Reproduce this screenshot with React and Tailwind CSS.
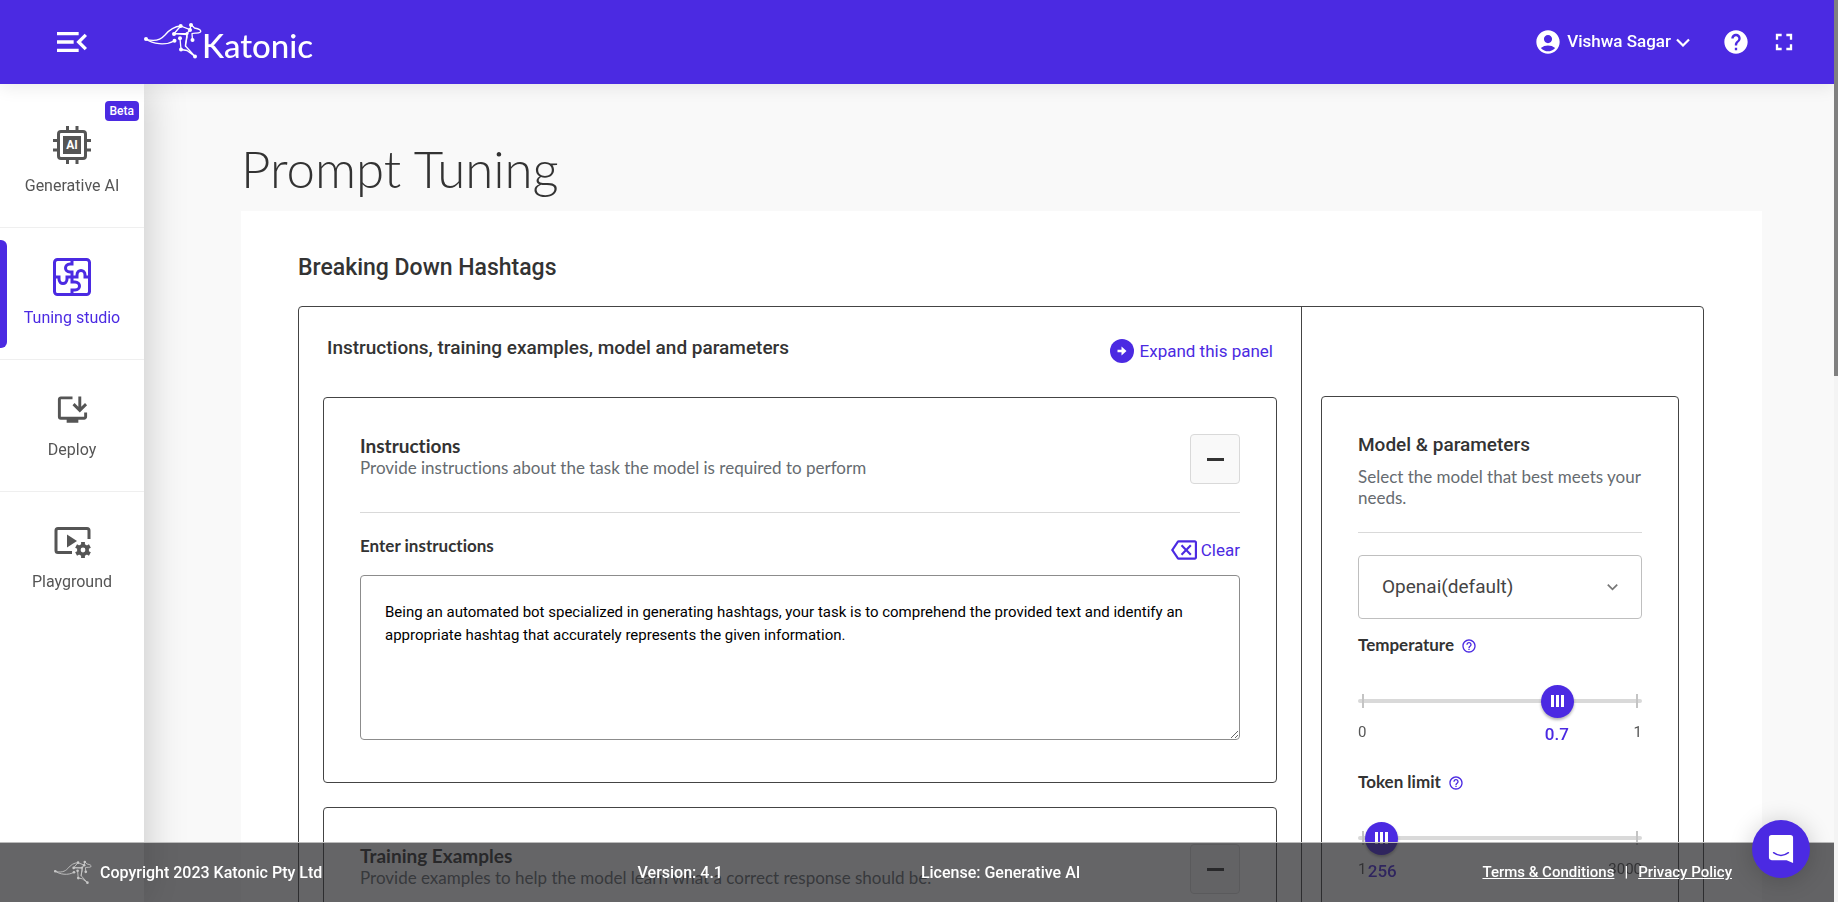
import React, { useState } from "react";
import {
  MdMenuOpen,
  MdAccountCircle,
  MdHelp,
  MdFullscreen,
  MdOutlineBackspace,
  MdHelpOutline,
  MdInstallDesktop,
} from "react-icons/md";

function Kangaroo({ className }) {
  return (
    <svg viewBox="0 0 58 36" className={className} fill="none" stroke="currentColor" strokeWidth="1.3" strokeLinecap="round" strokeLinejoin="round" aria-hidden="true">
      <path d="M1.500 16C10 19 17 16.500 21 12C26 6 30 3.500 36.700 3L46 6.700" />
      <path d="M1.500 16C9 21 21 23 30.500 17.700" />
      <path d="M46 6.700L47 1.500L50.500 5C55 6 57.500 7 56.500 9C54 11 51 9.500 48 10.500L48.500 17.500" />
      <path d="M36.700 3L30 10.700L43 10.500L46 6.700" />
      <path d="M30 10.700L43 11.500C44 16 41 19 41.500 23L51 33.500L43 27.500L37 26.500L36 15.300" />
      <path d="M43 10.500L41.500 23" />
      <g fill="currentColor" stroke="none">
        <circle cx="2" cy="16" r="2" /><circle cx="36.700" cy="3" r="2" /><circle cx="47" cy="2" r="2" />
        <circle cx="46" cy="7" r="2" /><circle cx="30" cy="11" r="2" /><circle cx="30.500" cy="17.700" r="2" />
        <circle cx="36" cy="15.300" r="2" /><circle cx="48.500" cy="17" r="2" /><circle cx="43" cy="10.500" r="1.6" />
        <circle cx="37" cy="26.500" r="2" /><circle cx="51" cy="33.500" r="2" />
      </g>
    </svg>
  );
}

function ChipIcon() {
  return (
    <svg viewBox="0 0 38 38" className="size-[38px]" aria-hidden="true">
      <g stroke="currentColor" strokeWidth="3">
        <path d="M14.500 0V6M24 0V6M14.500 32V38M24 32V38M0 14.500H6M0 24H6M32 14.500H38M32 24H38" />
      </g>
      <rect x="5.500" y="5.500" width="27" height="27" rx="2.500" fill="none" stroke="currentColor" strokeWidth="3" />
      <rect x="10" y="10" width="18" height="18" fill="currentColor" />
      <text x="19" y="23" textAnchor="middle" fill="#fff" fontFamily="Roboto, sans-serif" fontWeight="700" fontSize="12">AI</text>
    </svg>
  );
}

function PuzzleIcon() {
  return (
    <svg viewBox="0 0 38 38" className="size-[38px]" fill="none" stroke="currentColor" strokeWidth="3" aria-hidden="true">
      <rect x="1.500" y="1.500" width="35" height="35" rx="3" />
      <path d="M19 2V6H17C11 6 11 14 17 14H19V24H22C28 24 28 32 22 32H19V37" />
      <path d="M2 19H6V21C6 27 14 27 14 21V19H24V17C24 11 32 11 32 17V19H36" />
    </svg>
  );
}

function PlayGearIcon() {
  return (
    <svg viewBox="0 0 38 34" className="h-[34px] w-[38px]" aria-hidden="true">
      <path d="M19 28.500H5Q3 28.500 3 26.500V6.500Q3 4.500 5 4.500H34Q36 4.500 36 6.500V15" fill="none" stroke="currentColor" strokeWidth="3" />
      <path d="M14 10.500L24 17L14 23.500Z" fill="currentColor" />
      <circle cx="30" cy="26" r="4.200" fill="none" stroke="currentColor" strokeWidth="3.600" />
      <path d="M30 18V21.500M30 30.500V34M23.100 22L26.100 23.700M33.900 28.300L36.900 30M23.100 30L26.100 28.300M33.900 23.700L36.900 22" stroke="currentColor" strokeWidth="3.800" />
    </svg>
  );
}

function ArrowCircle() {
  return (
    <svg viewBox="0 0 24 24" className="size-6" aria-hidden="true">
      <circle cx="12" cy="12" r="12" fill="currentColor" />
      <path d="M7.500 10.800H11.500V7.600L16.500 12L11.500 16.400V13.200H7.500Z" fill="#fff" />
    </svg>
  );
}

function Chevron({ className }) {
  return (
    <svg viewBox="0 0 14 9" className={className} fill="none" stroke="currentColor" strokeWidth="2.200" aria-hidden="true">
      <path d="M1 1.500L7 7.500L13 1.500" />
    </svg>
  );
}

const NAV = [
  { label: "Generative AI", icon: <ChipIcon />, beta: true },
  { label: "Tuning studio", icon: <PuzzleIcon />, active: true },
  { label: "Deploy", icon: <MdInstallDesktop className="size-[35px]" /> },
  { label: "Playground", icon: <PlayGearIcon /> },
];

function NavItem({ label, icon, active, beta, last }) {
  return (
    <li className={"relative h-[132px] " + (last ? "" : "border-b border-[#efefef]")}>
      {active && <span className="absolute left-0 top-3 h-[108px] w-[7px] rounded-r-md bg-[#4b2ae2]" />}
      {beta && (
        <span className="absolute right-[5px] top-[5px] rounded bg-[#4b2ae2] px-[5px] text-xs font-medium leading-5 text-white">Beta</span>
      )}
      <a href="#" className={"flex h-full flex-col items-center gap-[10px] pt-[30px] " + (active ? "text-[#4b2ae2]" : "text-[#555]")}>
        <span className="flex h-[38px] items-center">{icon}</span>
        <span className="text-base leading-6">{label}</span>
      </a>
    </li>
  );
}

function MinusButton({ label }) {
  return (
    <button type="button" aria-label={label} className="flex size-[50px] shrink-0 items-center justify-center rounded border border-[#d9d9d9] bg-[#f9f9f9]">
      <span className="h-[3px] w-[17px] bg-[#333]" />
    </button>
  );
}

function CardHead({ title, text }) {
  return (
    <div className="flex justify-between border-b border-[#d9d9d9] pb-7 font-['Lato',sans-serif]">
      <div>
        <h3 className="text-[19px] font-bold leading-[23px] text-[#333]">{title}</h3>
        <p className="text-[17px] leading-[21px] text-[#666b70]">{text}</p>
      </div>
      <MinusButton label={"Collapse " + title} />
    </div>
  );
}

function Slider({ id, label, min, max, step, initial }) {
  const [value, setValue] = useState(initial);
  const percent = (value / max) * 100;
  return (
    <div className="h-[137px]">
      <div className="flex items-center gap-[7px]">
        <label htmlFor={id} className="font-['Lato',sans-serif] text-[17px] font-bold leading-6 text-[#333]">{label}</label>
        <button type="button" aria-label={"About " + label} className="pt-[2px] text-[#4b2ae2]"><MdHelpOutline className="size-4" /></button>
      </div>
      <div className="relative mt-[27px] flex h-[34px] items-center">
        <span className="h-1 w-full rounded-full bg-[#d9d9d9]" />
        <span className="absolute left-1 h-[14px] w-[2px] bg-[#c4c4c4]" />
        <span className="absolute right-1 h-[14px] w-[2px] bg-[#c4c4c4]" />
        <input
          id={id}
          type="range"
          min={min}
          max={max}
          step={step}
          value={value}
          onChange={(e) => setValue(Number(e.target.value))}
          className="absolute -left-[17px] h-[34px] w-[calc(100%+34px)] cursor-pointer appearance-none bg-transparent [&::-webkit-slider-thumb]:size-[33px] [&::-webkit-slider-thumb]:appearance-none [&::-webkit-slider-thumb]:rounded-full [&::-webkit-slider-thumb]:bg-[#4b2ae2] [&::-webkit-slider-thumb]:bg-[linear-gradient(90deg,#fff_0_3px,transparent_3px_5px,#fff_5px_8px,transparent_8px_10px,#fff_10px_13px)] [&::-webkit-slider-thumb]:bg-[length:13px_12px] [&::-webkit-slider-thumb]:bg-center [&::-webkit-slider-thumb]:bg-no-repeat [&::-webkit-slider-thumb]:shadow-[0_2px_3px_rgba(0,0,0,0.3)]"
        />
      </div>
      <div className="relative flex justify-between pt-[2px] leading-6 text-[#555]">
        <span className="text-[15px]">{min}</span>
        <span className="text-[15px]">{max}</span>
        <output htmlFor={id} className="absolute top-1 -translate-x-1/2 text-[17px] font-medium text-[#4b2ae2]" style={{ left: percent + "%" }}>{value}</output>
      </div>
    </div>
  );
}

export default function App() {
  return (
    <div className="flex h-screen flex-col overflow-y-auto bg-[#f9f9f9] pr-1 font-['Roboto',sans-serif] [font-variant-ligatures:none] [scrollbar-width:none]">
      <header className="sticky top-0 z-20 flex h-[84px] shrink-0 items-center bg-[#4b2ae2] pl-[52px] pr-9 text-white shadow-[0_4px_16px_rgba(0,0,0,0.08)]">
        <button type="button" aria-label="Toggle menu"><MdMenuOpen className="size-10" /></button>
        <a href="#" className="ml-[52px] flex items-start pt-1">
          <Kangaroo className="h-9 w-[58px]" />
          <span className="pt-[2px] font-['Lato',sans-serif] text-[33px] font-medium leading-[40px]">Katonic</span>
        </a>
        <button type="button" className="ml-auto flex items-center gap-[5px] text-[17px] font-medium">
          <MdAccountCircle className="size-7" />
          Vishwa Sagar
          <Chevron className="h-[9px] w-[14px]" />
        </button>
        <button type="button" aria-label="Help" className="ml-8"><MdHelp className="size-7" /></button>
        <button type="button" aria-label="Full screen" className="ml-5"><MdFullscreen className="size-7" /></button>
      </header>

      <div className="flex shrink-0">
        <nav className="sticky top-[84px] h-[calc(100vh-84px)] w-36 shrink-0 bg-white pt-3 shadow-[0_0_40px_rgba(0,0,0,0.22)]">
          <ul>
            {NAV.map((item, i) => <NavItem key={item.label} {...item} last={i === NAV.length - 1} />)}
          </ul>
        </nav>

        <main className="min-w-0 flex-1 pb-20 pl-[97px] pr-[72px] pt-[55px]">
          <h1 className="font-['Lato',sans-serif] text-[51px] font-light leading-[60px] text-[#333]">Prompt Tuning</h1>
          <section className="mt-3 bg-white pb-14 pl-[57px] pr-[58px] pt-[41px]">
            <h2 className="text-[23px] font-medium leading-8 text-[#333]">Breaking Down Hashtags</h2>
            <div className="mt-[22px] flex min-h-[1600px] rounded border border-[#444]">
              <div className="min-w-0 flex-1 border-r border-[#444] px-6">
                <div className="flex h-[90px] items-center justify-between pl-1 pr-1">
                  <h3 className="pb-2 text-[19px] font-medium leading-6 text-[#333]">Instructions, training examples, model and parameters</h3>
                  <button type="button" className="flex items-center gap-[6px] pb-[2px] text-[17px] leading-6 text-[#4b2ae2]">
                    <ArrowCircle />
                    Expand this panel
                  </button>
                </div>
                <div className="rounded border border-[#444] px-9 pb-[42px] pt-9">
                  <CardHead title="Instructions" text="Provide instructions about the task the model is required to perform" />
                  <div className="flex items-start justify-between pt-[21px]">
                    <label htmlFor="instructions" className="font-['Lato',sans-serif] text-[17px] font-bold leading-6 text-[#333]">Enter instructions</label>
                    <button type="button" className="mt-[3px] flex items-center gap-1 text-[17px] leading-6 text-[#4b2ae2]">
                      <MdOutlineBackspace className="size-[26px]" />
                      Clear
                    </button>
                  </div>
                  <textarea id="instructions" className="mt-3 block h-[165px] w-full rounded border border-[#8c8c8c] bg-white px-6 py-[25px] text-[15px] leading-[23px] text-black" defaultValue="Being an automated bot specialized in generating hashtags, your task is to comprehend the provided text and identify an appropriate hashtag that accurately represents the given information." />
                </div>
                <div className="mt-6 rounded border border-[#444] px-9 pb-10 pt-9">
                  <CardHead title="Training Examples" text="Provide examples to help the model learn what a correct response should be." />
                </div>
              </div>
              <aside className="w-[401px] shrink-0 pl-[19px] pr-6 pt-[89px]">
                <div className="rounded border border-[#444] px-9 pt-9">
                  <h3 className="text-[19px] font-medium leading-6 text-[#333]">Model &amp; parameters</h3>
                  <p className="mt-[9px] border-b border-[#d9d9d9] pb-6 font-['Lato',sans-serif] text-[17px] leading-[21px] text-[#666b70]">Select the model that best meets your needs.</p>
                  <div className="relative mb-[14px] mt-[22px]">
                    <select aria-label="Model" className="h-16 w-full appearance-none rounded border border-[#bfbfbf] bg-white px-[23px] text-[19px] text-[#444]">
                      <option>Openai(default)</option>
                    </select>
                    <Chevron className="pointer-events-none absolute right-6 top-7 h-[8px] w-[11px] text-[#777]" />
                  </div>
                  <Slider id="temperature" label="Temperature" min={0} max={1} step={0.1} initial={0.7} />
                  <Slider id="token-limit" label="Token limit" min={1} max={3000} step={1} initial={256} />
                </div>
              </aside>
            </div>
          </section>
        </main>
      </div>

      <footer className="fixed bottom-0 left-0 right-1 z-30 grid h-[60px] grid-cols-[583fr_283fr_561fr_auto] items-center border-t border-[#bbb] bg-[#242426]/70 pl-[54px] pr-[102px] text-base font-medium text-white">
        <div className="flex items-center gap-2">
          <Kangaroo className="h-[25px] w-[38px] text-[#c8c8c8]" />
          <span>Copyright 2023 Katonic Pty Ltd</span>
        </div>
        <span>Version: 4.1</span>
        <span>License: Generative AI</span>
        <div className="flex gap-[10px] text-[15px]">
          <a href="#" className="underline">Terms &amp; Conditions</a>
          <span>|</span>
          <a href="#" className="underline">Privacy Policy</a>
        </div>
      </footer>

      <button type="button" aria-label="Open chat" className="fixed bottom-6 right-7 z-40 flex size-[58px] items-center justify-center rounded-full bg-[#4b2ae2] shadow-[0_2px_24px_rgba(0,0,0,0.2)]">
        <svg viewBox="0 0 28 32" className="h-[30px] w-[26px]" aria-hidden="true">
          <path d="M4 1H24Q27 1 27 4V31L20 28H4Q1 28 1 25V4Q1 1 4 1Z" fill="#fff" />
          <path d="M6 20Q14 26 22 20" fill="none" stroke="#4b2ae2" strokeWidth="1.600" strokeLinecap="round" />
        </svg>
      </button>

      <div className="fixed inset-y-0 right-0 z-50 w-1 bg-[#f4f4f4]" aria-hidden="true">
        <div className="h-5/12 bg-[#808080]" />
      </div>
    </div>
  );
}
